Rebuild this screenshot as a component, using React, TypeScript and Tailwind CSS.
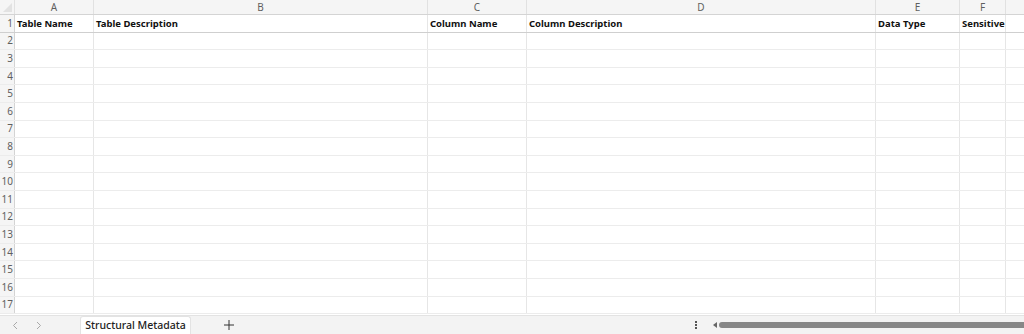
import React from 'react';

const cols = [
    { letter: 'A', w: 79, title: 'Table Name' },
    { letter: 'B', w: 334, title: 'Table Description' },
    { letter: 'C', w: 99, title: 'Column Name' },
    { letter: 'D', w: 349, title: 'Column Description' },
    { letter: 'E', w: 84, title: 'Data Type' },
    { letter: 'F', w: 46, title: 'Sensitive' },
    { letter: 'G', w: 40, title: '' },
];

const rows = Array.from({ length: 17 }, (_, i) => i + 1);

export default function App() {
    return (
        <div className="w-[1024px] h-[334px] bg-white overflow-hidden flex flex-col" style={{ fontFamily: '"Noto Sans", "Open Sans", sans-serif' }}>
            {/* column letters */}
            <div className="flex h-[15px] bg-[#f5f5f5] border-b border-[#d4d4d4] shrink-0">
                <div className="w-[15px] shrink-0 border-r border-[#e1e1e1] relative">
                    <svg className="absolute right-[2px] bottom-[2px]" width="9" height="9" viewBox="0 0 9 9">
                        <path d="M9 0 L9 9 L0 9 Z" fill="#e2e2e2" />
                    </svg>
                </div>
                {cols.map(c => (
                    <div key={c.letter} style={{ width: c.w }} className="shrink-0 border-r border-[#e1e1e1] flex items-center justify-center text-[10px] text-[#5f5f5f]">
                        {c.letter === 'G' ? '' : c.letter}
                    </div>
                ))}
            </div>

            {/* grid */}
            <div className="flex-1 overflow-hidden">
                {rows.map(r => (
                    <div key={r} className={`flex h-[17.6px] border-b ${r === 1 ? 'border-[#cfcfcf]' : 'border-[#ececec]'}`}>
                        <div className="w-[15px] shrink-0 bg-[#f5f5f5] border-r border-[#d4d4d4] flex items-center justify-end pr-[1px] text-[10px] text-[#5f5f5f]">
                            {r}
                        </div>
                        {cols.map(c => (
                            <div key={c.letter} style={{ width: c.w }} className="shrink-0 border-r border-[#e6e6e6] flex items-center pl-[2px] pt-[1px] text-[9.5px] font-bold text-[#111] whitespace-nowrap overflow-hidden">
                                {r === 1 ? c.title : ''}
                            </div>
                        ))}
                    </div>
                ))}
            </div>

            {/* sheet tabs bar */}
            <div className="h-[19px] shrink-0 bg-[#f3f3f3] border-t border-[#e3e3e3] flex items-end text-[#444]">
                <div className="w-[80px] h-full flex items-center gap-[18px] pl-[12px] text-[#a8a8a8]">
                    <svg width="6" height="9" viewBox="0 0 6 9"><path d="M5 1 L1.5 4.5 L5 8" fill="none" stroke="currentColor" strokeWidth="1" /></svg>
                    <svg width="6" height="9" viewBox="0 0 6 9"><path d="M1 1 L4.5 4.5 L1 8" fill="none" stroke="currentColor" strokeWidth="1" /></svg>
                </div>
                <div className="h-[18px] w-[111px] bg-white rounded-t-[3px] border-x border-t border-[#e3e3e3] flex items-center justify-center text-[10.5px] font-medium text-[#222] whitespace-nowrap">
                    Structural Metadata
                </div>
                <div className="h-full w-[75px] flex items-center justify-center">
                    <svg width="10" height="10" viewBox="0 0 10 10"><path d="M5 0 V10 M0 5 H10" stroke="#333" strokeWidth="1" /></svg>
                </div>
                <div className="flex-1" />
                <div className="h-full w-[10px] flex flex-col items-center justify-center gap-[1px] mr-[12px]">
                    <span className="w-[2px] h-[2px] bg-[#555]" />
                    <span className="w-[2px] h-[2px] bg-[#555]" />
                    <span className="w-[2px] h-[2px] bg-[#555]" />
                </div>
                <div className="h-full w-[311px] flex items-center gap-[2px]">
                    <svg width="4" height="6" viewBox="0 0 4 6"><path d="M4 0 L0 3 L4 6 Z" fill="#666" /></svg>
                    <div className="flex-1 h-[6px] rounded-l-full bg-[#878787]" />
                </div>
            </div>
        </div>
    );
}
